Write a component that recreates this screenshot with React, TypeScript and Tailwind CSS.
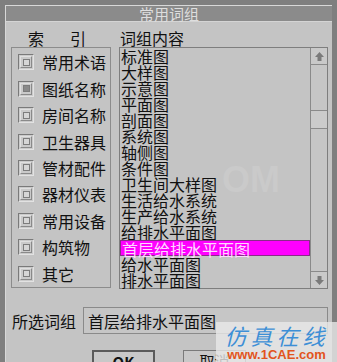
import React from "react";

const indexItems = [
  { label: "常用术语", checked: false },
  { label: "图纸名称", checked: true },
  { label: "房间名称", checked: false },
  { label: "卫生器具", checked: false },
  { label: "管材配件", checked: false },
  { label: "器材仪表", checked: false },
  { label: "常用设备", checked: false },
  { label: "构筑物", checked: false },
  { label: "其它", checked: false },
];

const phrases = [
  "标准图",
  "大样图",
  "示意图",
  "平面图",
  "剖面图",
  "系统图",
  "轴侧图",
  "条件图",
  "卫生间大样图",
  "生活给水系统",
  "生产给水系统",
  "给排水平面图",
  "首层给排水平面图",
  "给水平面图",
  "排水平面图",
];

const font = { fontFamily: '"Noto Sans CJK SC", "Noto Sans", sans-serif' };

function CheckBox({ checked }: { checked: boolean }) {
  return (
    <div className="w-[16px] h-[16px] flex items-center justify-center border border-t-[#7a7a7a] border-l-[#7a7a7a] border-r-[#e2e2e2] border-b-[#e2e2e2] bg-[#cacaca]">
      <div className="w-[12px] h-[12px] flex items-center justify-center border border-t-[#e0e0e0] border-l-[#e0e0e0] border-r-[#8a8a8a] border-b-[#8a8a8a]">
        <div
          className={
            "w-[7px] h-[7px] border border-[#7c7c7c] " +
            (checked ? "bg-[#8a8a8a]" : "bg-[#d6d6d6]")
          }
        />
      </div>
    </div>
  );
}

function Arrow({ up }: { up: boolean }) {
  return (
    <svg width="11" height="11" viewBox="0 0 11 11">
      {up ? (
        <path d="M5.5 1 L10 6 L7.5 6 L7.5 10 L3.5 10 L3.5 6 L1 6 Z" fill="#7a7a7a" />
      ) : (
        <path d="M5.5 10 L10 5 L7.5 5 L7.5 1 L3.5 1 L3.5 5 L1 5 Z" fill="#7a7a7a" />
      )}
    </svg>
  );
}

export default function App() {
  return (
    <div
      className="relative w-[337px] h-[362px] overflow-hidden bg-[#7f7f7f] p-[5px] pb-0"
      style={font}
    >
      <div className="flex flex-col h-full bg-[#c4c4c4] border-l border-t border-[#d8d8d8]">
        {/* title bar */}
        <div className="h-[16px] bg-[#8b8b8b] border-b border-[#d4d4d4] flex items-center justify-center text-[#dedede] text-[15px] leading-[16px]">
          常用词组
        </div>

        <div className="flex pl-[5px] pr-[4px] gap-[8px]">
          {/* index column */}
          <div className="flex flex-col w-[100px]">
            <div className="h-[25px] flex items-end pl-[17px] text-[16px] leading-[18px] text-[#111]">
              索<span className="ml-[26px]">引</span>
            </div>
            <div className="h-[241px] border border-[#8c8c8c] flex flex-col pt-[1px]">
              {indexItems.map((it) => (
                <div key={it.label} className="h-[27px] flex items-center pl-[6px] gap-[8px]">
                  <CheckBox checked={it.checked} />
                  <span className="text-[16px] leading-[18px] text-[#111]">{it.label}</span>
                </div>
              ))}
            </div>
          </div>

          {/* phrase column */}
          <div className="flex flex-col flex-1">
            <div className="h-[25px] flex items-end text-[16px] leading-[18px] text-[#111] pl-[1px]">
              词组内容
            </div>
            <div className="h-[242px] border border-[#7e7e7e] flex">
              <div className="flex-1 flex flex-col">
                {phrases.map((p, i) => (
                  <div
                    key={i}
                    className={
                      "h-[16px] leading-[16px] text-[16px] pl-[1px] whitespace-nowrap " +
                      (i === 12
                        ? "bg-[#ff00ff] text-[#ffd8ff] border border-[#8a2a8a] leading-[14px]"
                        : "text-[#111]")
                    }
                  >
                    {p}
                  </div>
                ))}
              </div>
              {/* scrollbar */}
              <div className="w-[17px] flex flex-col border-l border-[#8a8a8a] bg-[#c6c6c6]">
                <div className="h-[17px] flex items-center justify-center border-b border-[#8a8a8a] bg-[#c9c9c9]">
                  <Arrow up />
                </div>
                <div className="h-[45px]" />
                <div className="h-[19px] border-t border-b border-[#8a8a8a] bg-[#cbcbcb]" />
                <div className="flex-1" />
                <div className="h-[17px] flex items-center justify-center border-t border-[#8a8a8a] bg-[#c9c9c9]">
                  <Arrow up={false} />
                </div>
              </div>
            </div>
          </div>
        </div>

        {/* selected phrase */}
        <div className="flex items-center mt-[18px] pl-[6px] pr-[4px] gap-[7px]">
          <span className="text-[16px] leading-[18px] text-[#111] whitespace-nowrap">所选词组</span>
          <div className="flex-1 h-[27px] border border-[#8a8a8a] bg-[#c6c6c6] flex items-center pl-[4px] text-[16px] text-[#111]">
            首层给排水平面图
          </div>
        </div>

        {/* buttons */}
        <div className="flex mt-[16px] pl-[86px] gap-[28px]">
          <div className="w-[63px] h-[24px] border-2 border-[#5a5a5a] bg-[#c8c8c8] flex justify-center text-[15px] font-bold leading-[20px] text-[#111]">
            OK
          </div>
          <div className="w-[63px] h-[24px] border border-[#7a7a7a] bg-[#c8c8c8] flex justify-center text-[15px] leading-[20px] text-[#111]">
            取消
          </div>
        </div>
      </div>

      {/* faint watermark */}
      <div className="absolute left-[222px] top-[162px] text-[36px] font-bold text-[#cdcdcd] opacity-70 leading-none pointer-events-none" style={{ fontFamily: '"Liberation Sans", sans-serif' }}>
        OM
      </div>

      {/* site watermark */}
      <div className="absolute left-[216px] top-[322px] w-[121px] h-[40px] bg-[#e8e8e8]/80 flex flex-col items-center pointer-events-none">
        <div className="text-[22px] leading-[26px] text-[#3d8fd6] italic tracking-[4px]" style={{ fontFamily: '"Noto Sans CJK SC", sans-serif' }}>
          仿真在线
        </div>
        <div className="text-[13px] leading-[13px] font-bold text-[#e2541c]" style={{ fontFamily: '"Liberation Sans", sans-serif' }}>
          www.1CAE.com
        </div>
      </div>
    </div>
  );
}
